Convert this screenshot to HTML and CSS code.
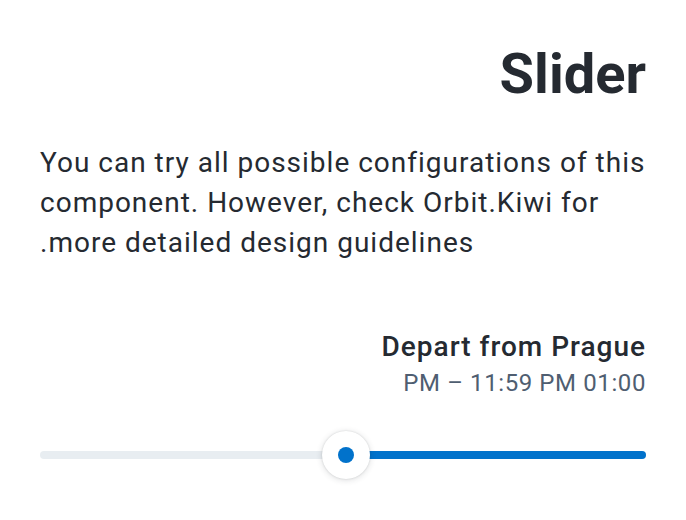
FILE: index.html
```html
<!DOCTYPE html>
<html lang="en" dir="rtl">
<head>
<meta charset="utf-8">
<link rel="stylesheet" href="styles.css">
</head>
<body>
<main class="page">
  <h1 class="title">Slider</h1>
  <p class="intro">You can try all possible configurations of this component. However, check Orbit.Kiwi for more detailed design guidelines.</p>
  <section class="slider">
    <div class="slider-head">
      <div class="slider-label">Depart from Prague</div>
      <div class="slider-value">01:00 PM – 11:59 PM</div>
    </div>
    <div class="slider-control">
      <div class="slider-rail">
        <div class="slider-fill" style="width: 49.5%"></div>
      </div>
      <div class="slider-handle" style="right: 49.5%"><span class="slider-dot"></span></div>
    </div>
  </section>
</main>
</body>
</html>
```
FILE: styles.css
```css
html, body {
  margin: 0;
  padding: 0;
  background: #ffffff;
}
body {
  font-family: Roboto, "Liberation Sans", sans-serif;
  color: #252a31;
}
.page {
  padding: 42px 40px 40px 40px;
  display: flex;
  flex-direction: column;
}
.title {
  margin: 0;
  font-size: 56px;
  font-weight: 700;
  line-height: 64px;
  text-align: right;
}
.intro {
  margin: 37px 0 0 0;
  font-size: 28px;
  letter-spacing: 1px;
  line-height: 40px;
  text-align: left;
}
.slider {
  margin-top: 66px;
  display: flex;
  flex-direction: column;
}
.slider-head {
  display: flex;
  flex-direction: column;
  align-items: flex-start;
}
.slider-label {
  font-size: 28px;
  font-weight: 500;
  letter-spacing: 1px;
  line-height: 36px;
}
.slider-value {
  margin-top: 2px;
  font-size: 24px;
  letter-spacing: 0.6px;
  line-height: 32px;
  color: #4f5e71;
}
.slider-control {
  position: relative;
  margin-top: 32px;
  height: 48px;
  display: flex;
  align-items: center;
}
.slider-rail {
  flex: 1;
  height: 8px;
  border-radius: 4px;
  background: #e8edf1;
}
.slider-fill {
  height: 100%;
  border-radius: 4px;
  background: #0172cb;
}
.slider-handle {
  position: absolute;
  top: 0;
  width: 48px;
  height: 48px;
  margin-right: -24px;
  border-radius: 50%;
  background: #ffffff;
  box-shadow: 0 0 2px rgba(37, 42, 49, 0.16), 0 1px 6px rgba(37, 42, 49, 0.16);
  display: flex;
  align-items: center;
  justify-content: center;
}
.slider-dot {
  width: 16px;
  height: 16px;
  border-radius: 50%;
  background: #0172cb;
}
```
